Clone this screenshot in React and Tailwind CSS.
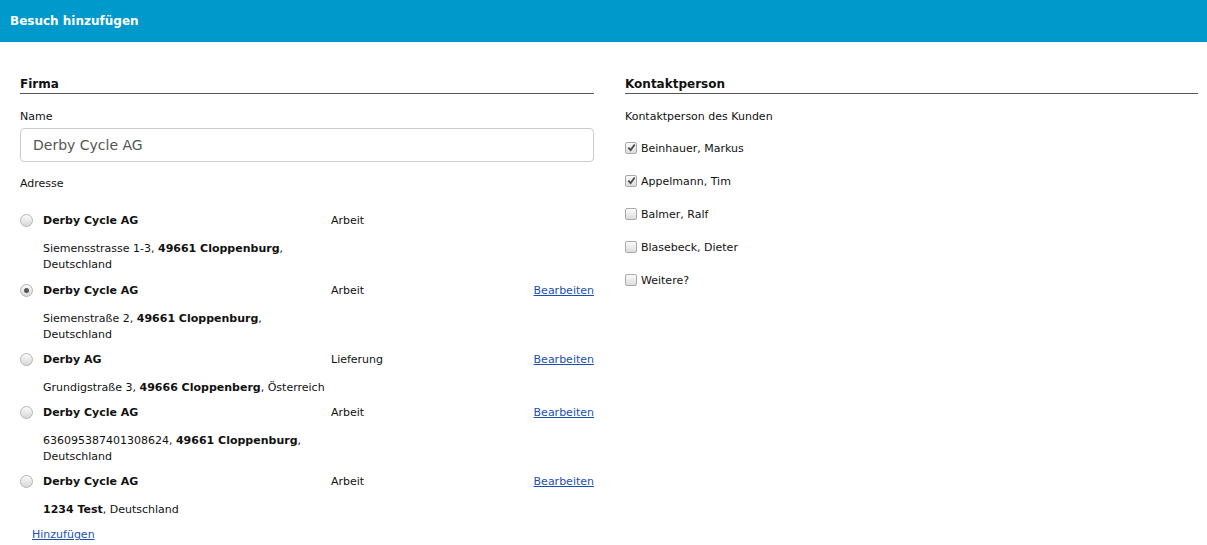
import React from "react";

const addresses = [
    { name: "Derby Cycle AG", type: "Arbeit", edit: false, checked: false, street: "Siemensstrasse 1-3, ", city: "49661 Cloppenburg", rest: ", Deutschland" },
    { name: "Derby Cycle AG", type: "Arbeit", edit: true, checked: true, street: "Siemenstraße 2, ", city: "49661 Cloppenburg", rest: ", Deutschland" },
    { name: "Derby AG", type: "Lieferung", edit: true, checked: false, street: "Grundigstraße 3, ", city: "49666 Cloppenberg", rest: ", Österreich" },
    { name: "Derby Cycle AG", type: "Arbeit", edit: true, checked: false, street: "636095387401308624, ", city: "49661 Cloppenburg", rest: ", Deutschland" },
    { name: "Derby Cycle AG", type: "Arbeit", edit: true, checked: false, street: "", city: "1234 Test", rest: ", Deutschland" },
];

const contacts = [
    { name: "Beinhauer, Markus", checked: true },
    { name: "Appelmann, Tim", checked: true },
    { name: "Balmer, Ralf", checked: false },
    { name: "Blasebeck, Dieter", checked: false },
    { name: "Weitere?", checked: false },
];

const Radio = ({ checked }) => (
    <span className="w-[13px] h-[13px] rounded-full border border-[#b5b5b5] bg-gradient-to-b from-[#fafafa] to-[#d8d8d8] flex items-center justify-center shrink-0">
        {checked && <span className="w-[5px] h-[5px] rounded-full bg-[#555]" />}
    </span>
);

const Checkbox = ({ checked }) => (
    <span className="w-[12px] h-[12px] rounded-[2px] border border-[#a9a9a9] bg-gradient-to-b from-[#fbfbfb] to-[#dcdcdc] flex items-center justify-center shrink-0">
        {checked && (
            <svg width="9" height="9" viewBox="0 0 10 10">
                <path d="M1.5 5.2 L4 7.8 L8.6 1.6" fill="none" stroke="#4a4a4a" strokeWidth="2" />
            </svg>
        )}
    </span>
);

const App = () => {
    return (
        <div className="w-[1207px] h-[545px] bg-white text-[#111] text-[11px] leading-[16px] font-['DejaVu_Sans',Verdana,sans-serif] overflow-hidden">
            {/* Kopfzeile */}
            <div className="h-[42px] bg-[#0099cc] flex items-center px-[10px]">
                <span className="text-white font-bold text-[12px]">Besuch hinzufügen</span>
            </div>

            <div className="flex pl-[20px] pr-[9px] pt-[34px] gap-[31px]">
                {/* Firma */}
                <div className="w-[574px]">
                    <div className="font-bold text-[12px] leading-[16px] border-b border-[#555] pb-[1px]">Firma</div>
                    <div className="mt-[15px]">Name</div>
                    <div className="mt-[3px] h-[34px] border border-[#ccc] rounded-[4px] flex items-center px-[12px] text-[14px] text-[#555]">
                        Derby Cycle AG
                    </div>
                    <div className="mt-[14px]">Adresse</div>

                    <div className="mt-[21px]">
                        {addresses.map((a, i) => (
                            <div key={i} className={`flex ${i === 0 ? "mb-[10px]" : "mb-[9px]"}`}>
                                <div className="w-[23px] pt-[1px]">
                                    <Radio checked={a.checked} />
                                </div>
                                <div className="w-[288px] shrink-0">
                                    <div className="font-bold">{a.name}</div>
                                    <div className="mt-[12px] w-[286px]">
                                        {a.street}
                                        <b>{a.city}</b>
                                        {a.rest}
                                    </div>
                                </div>
                                <div className="flex-1">{a.type}</div>
                                <div>
                                    {a.edit && <a href="#" className="text-[#1a4fb0] underline">Bearbeiten</a>}
                                </div>
                            </div>
                        ))}
                        <a href="#" className="ml-[12px] text-[#1a4fb0] underline">Hinzufügen</a>
                    </div>
                </div>

                {/* Kontaktperson */}
                <div className="flex-1">
                    <div className="font-bold text-[12px] leading-[16px] border-b border-[#555] pb-[1px]">Kontaktperson</div>
                    <div className="mt-[15px]">Kontaktperson des Kunden</div>
                    <div className="mt-[16px] flex flex-col gap-[17px]">
                        {contacts.map((c) => (
                            <div key={c.name} className="flex items-center gap-[4px]">
                                <span className="-mt-[3px]"><Checkbox checked={c.checked} /></span>
                                <span>{c.name}</span>
                            </div>
                        ))}
                    </div>
                </div>
            </div>
        </div>
    );
};

export default App;
